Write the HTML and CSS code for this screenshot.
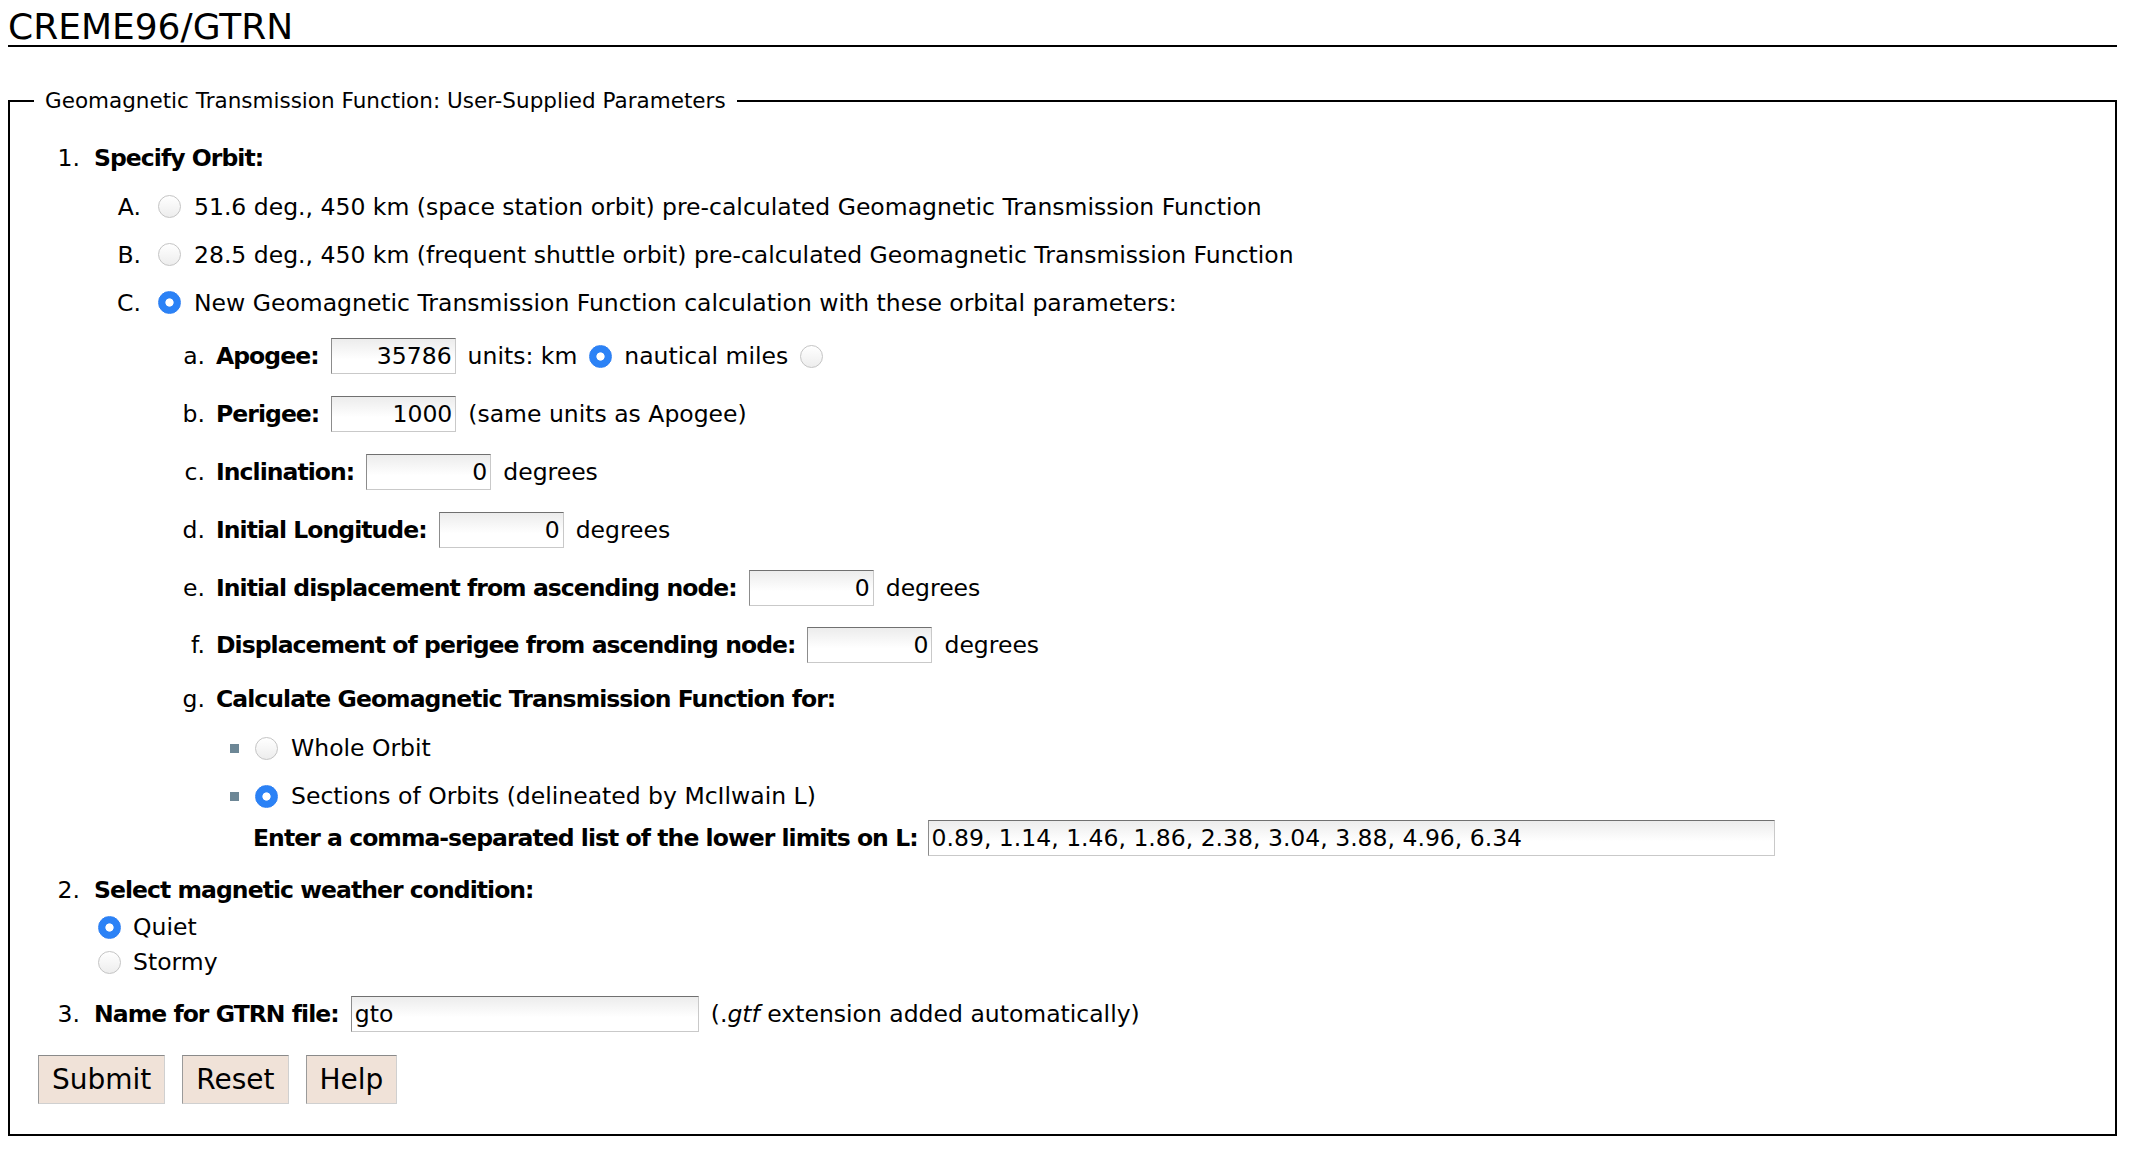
FILE: index.html
```html
<!DOCTYPE html>
<html lang="en">
<head>
<meta charset="utf-8">
<title>CREME96/GTRN</title>
<link rel="stylesheet" href="styles.css">
</head>
<body>
<h1 class="title">CREME96/GTRN</h1>
<form class="form">
  <fieldset class="panel">
    <legend class="panel-legend">Geomagnetic Transmission Function: User-Supplied Parameters</legend>
    <div class="panel-body">

      <div class="step">
        <div class="row step-head"><span class="num">1.</span><b class="lbl">Specify Orbit:</b></div>
        <div class="orbit-list">
          <div class="row orbit"><span class="alpha">A.</span><input class="radio" type="radio" name="orbit"><span class="rtext">51.6 deg., 450 km (space station orbit) pre-calculated Geomagnetic Transmission Function</span></div>
          <div class="row orbit"><span class="alpha">B.</span><input class="radio" type="radio" name="orbit"><span class="rtext">28.5 deg., 450 km (frequent shuttle orbit) pre-calculated Geomagnetic Transmission Function</span></div>
          <div class="row orbit"><span class="alpha">C.</span><input class="radio" type="radio" name="orbit" checked><span class="rtext">New Geomagnetic Transmission Function calculation with these orbital parameters:</span></div>

          <div class="param-list">
            <div class="row param"><span class="sub">a.</span><b class="lbl">Apogee:</b><input class="field num-field" type="text" value="35786"><span>units: km</span><input class="radio" type="radio" name="units" checked><span>nautical miles</span><input class="radio" type="radio" name="units"></div>
            <div class="row param"><span class="sub">b.</span><b class="lbl">Perigee:</b><input class="field num-field" type="text" value="1000"><span>(same units as Apogee)</span></div>
            <div class="row param"><span class="sub">c.</span><b class="lbl">Inclination:</b><input class="field num-field" type="text" value="0"><span>degrees</span></div>
            <div class="row param"><span class="sub">d.</span><b class="lbl">Initial Longitude:</b><input class="field num-field" type="text" value="0"><span>degrees</span></div>
            <div class="row param"><span class="sub">e.</span><b class="lbl">Initial displacement from ascending node:</b><input class="field num-field" type="text" value="0"><span>degrees</span></div>
            <div class="row param"><span class="sub">f.</span><b class="lbl">Displacement of perigee from ascending node:</b><input class="field num-field" type="text" value="0"><span>degrees</span></div>
            <div class="row param param-g"><span class="sub">g.</span><b class="lbl">Calculate Geomagnetic Transmission Function for:</b></div>
            <div class="g-list">
              <div class="row bullet-row"><span class="bullet"></span><input class="radio" type="radio" name="section"><span class="rtext">Whole Orbit</span></div>
              <div class="row bullet-row"><span class="bullet"></span><input class="radio" type="radio" name="section" checked><span class="rtext">Sections of Orbits (delineated by McIlwain L)</span></div>
              <div class="row limits-row"><b class="lbl">Enter a comma-separated list of the lower limits on L:</b><input class="field limits-field" type="text" value="0.89, 1.14, 1.46, 1.86, 2.38, 3.04, 3.88, 4.96, 6.34"></div>
            </div>
          </div>
        </div>
      </div>

      <div class="step step-2">
        <div class="row step-head"><span class="num">2.</span><b class="lbl">Select magnetic weather condition:</b></div>
        <div class="weather-list">
          <div class="row weather"><input class="radio" type="radio" name="weather" checked><span class="rtext">Quiet</span></div>
          <div class="row weather"><input class="radio" type="radio" name="weather"><span class="rtext">Stormy</span></div>
        </div>
      </div>

      <div class="step step-3">
        <div class="row step-head file-row"><span class="num">3.</span><b class="lbl">Name for GTRN file:</b><input class="field name-field" type="text" value="gto"><span>(.<i>gtf</i> extension added automatically)</span></div>
      </div>

      <div class="buttons">
        <button type="button" class="btn">Submit</button>
        <button type="button" class="btn">Reset</button>
        <button type="button" class="btn">Help</button>
      </div>
    </div>
  </fieldset>
</form>
</body>
</html>
```

FILE: styles.css
```css
html, body {
  background: #ffffff;
}
body {
  margin: 8px 13px 8px 8px;
  font-family: "DejaVu Sans", "Liberation Sans", sans-serif;
  font-size: 23.5px;
  color: #000;
}
.title {
  margin: 0;
  font-size: 36px;
  font-weight: normal;
  line-height: 37px;
  border-bottom: 2px solid #000;
}
.form {
  margin: 42px 0 0 0;
}
.panel {
  margin: 0;
  padding: 0 0 30px 0;
  border: 2px solid #000;
  min-width: 0;
}
.panel-legend {
  margin-left: 24px;
  padding: 0 11px;
  font-size: 21.5px;
  line-height: 24px;
}
.panel-body {
  padding-top: 25px;
}
.row {
  display: flex;
  align-items: center;
  white-space: nowrap;
}
.lbl {
  font-weight: bold;
  letter-spacing: -0.95px;
}
.step-head {
  height: 40px;
}
.num {
  width: 84px;
  padding-right: 14px;
  box-sizing: border-box;
  text-align: right;
  flex: none;
}
.orbit-list {
  margin-left: 84px;
  margin-top: 4.5px;
}
.orbit {
  height: 48px;
}
.alpha {
  width: 64px;
  padding-right: 17px;
  box-sizing: border-box;
  text-align: right;
  flex: none;
}
.radio {
  -webkit-appearance: none;
  appearance: none;
  width: 23px;
  height: 23px;
  margin: 0;
  flex: none;
  box-sizing: border-box;
  border-radius: 50%;
  border: 1px solid #c4c4c4;
  background: linear-gradient(#ffffff, #ededed);
}
.radio:checked {
  border-color: #2d7ff3;
  background: radial-gradient(circle, #ffffff 0 3.7px, #2b82f6 4.5px);
}
.orbit .radio {
  margin-right: 13px;
}
.param-list {
  margin-left: 64px;
  margin-top: 1px;
}
.param {
  height: 57.8px;
  gap: 12px;
}
.sub {
  width: 58px;
  padding-right: 11px;
  box-sizing: border-box;
  text-align: right;
  flex: none;
  margin-right: -12px;
}
.field {
  font-family: "DejaVu Sans", "Liberation Sans", sans-serif;
  font-size: 23.5px;
  color: #000;
  box-sizing: border-box;
  margin: 0;
  padding: 0 3px;
  border: 1px solid #c9c9c9;
  border-top-color: #707070;
  border-left-color: #8c8c8c;
  background: linear-gradient(#ececec, #ffffff 60%);
  outline: none;
}
.num-field {
  width: 125px;
  height: 36px;
  text-align: right;
}
.param-g {
  height: 50px;
}
.g-list {
  margin-left: 58px;
}
.bullet-row {
  height: 48px;
  padding-left: 14px;
}
.bullet {
  width: 9px;
  height: 9px;
  background: #6d8796;
  flex: none;
  margin-right: 16px;
}
.bullet-row .radio {
  margin-right: 13px;
}
.limits-row {
  height: 36px;
  padding-left: 37px;
  gap: 10px;
}
.limits-field {
  width: 847px;
  height: 36px;
}
.step-2 {
  margin-top: 13.7px;
}
.weather {
  height: 35px;
  margin-left: 88px;
}
.weather .radio {
  margin-right: 12px;
}
.step-3 {
  margin-top: 14.5px;
}
.file-row {
  gap: 12px;
}
.file-row .num {
  margin-right: -12px;
}
.name-field {
  width: 348px;
  height: 36px;
}
.buttons {
  display: flex;
  gap: 17px;
  margin-top: 21px;
  margin-left: 28px;
}
.btn {
  font-family: "DejaVu Sans", "Liberation Sans", sans-serif;
  font-size: 28px;
  color: #000;
  height: 49px;
  margin: 0;
  padding: 0 13px;
  border: 1px solid #d0d0d0;
  border-top-color: #8a8a8a;
  border-left-color: #9a9a9a;
  background: #f0e2d8;
  border-radius: 0;
}
```
